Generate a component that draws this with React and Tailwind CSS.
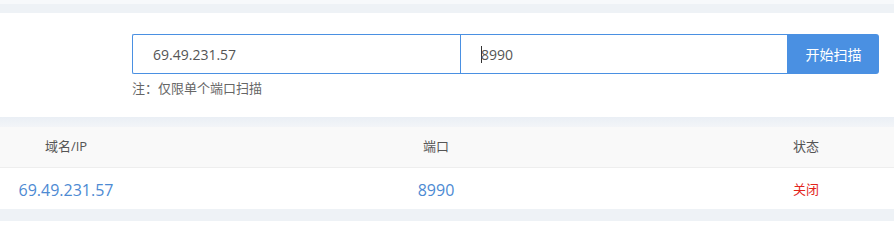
import React from 'react';

function PortScan() {
  const rows = [{ host: '69.49.231.57', port: '8990', status: '关闭' }];

  return (
    <div className="w-[894px] h-[221px] overflow-hidden bg-[#eef2f6] font-['Open_Sans','Noto_Sans_CJK_SC',sans-serif]">
      {/* top strip */}
      <div className="h-[4px] bg-[#f7f9fb]" />
      <div className="h-[9px]" />

      {/* scan form */}
      <section className="h-[104px] bg-white pt-[21px] pl-[132px]">
        <div className="flex h-[40px]">
          <div className="w-[328px] border border-[#4a90e2] border-r-0 rounded-l-[2px] flex items-center pl-[20px] text-[14px] text-[#555]">
            69.49.231.57
          </div>
          <div className="w-[328px] border border-[#4a90e2] flex items-center pl-[20px] text-[14px] text-[#555]">
            <span className="w-px h-[17px] bg-[#333] -mr-px" />
            8990
          </div>
          <button className="w-[91px] bg-[#4a90e2] text-white text-[14px] rounded-r-[3px] flex items-center justify-center">
            开始扫描
          </button>
        </div>
        <p className="mt-[5px] text-[13px] leading-[18px] text-[#666]">注：仅限单个端口扫描</p>
      </section>

      <div className="h-[10px] bg-gradient-to-b from-[#eaeff5] to-[#f3f5f8]" />

      {/* result table */}
      <div className="bg-white">
        <div className="grid grid-cols-[132px_608px_132px] h-[41px] items-center bg-[#f9f9f9] border-b border-[#eeeeee] text-[13px] text-[#555]">
          <div className="text-center">域名/IP</div>
          <div className="text-center">端口</div>
          <div className="text-center">状态</div>
        </div>
        {rows.map((r, i) => (
          <div key={i} className="grid grid-cols-[132px_608px_132px] h-[41px] items-center pt-[2px] text-[16px]">
            <div className="text-center text-[#4d8ad3]">{r.host}</div>
            <div className="text-center text-[#4d8ad3]">{r.port}</div>
            <div className="text-center text-[13px] text-[#e3241b]">{r.status}</div>
          </div>
        ))}
      </div>
    </div>
  );
}

export default PortScan;
